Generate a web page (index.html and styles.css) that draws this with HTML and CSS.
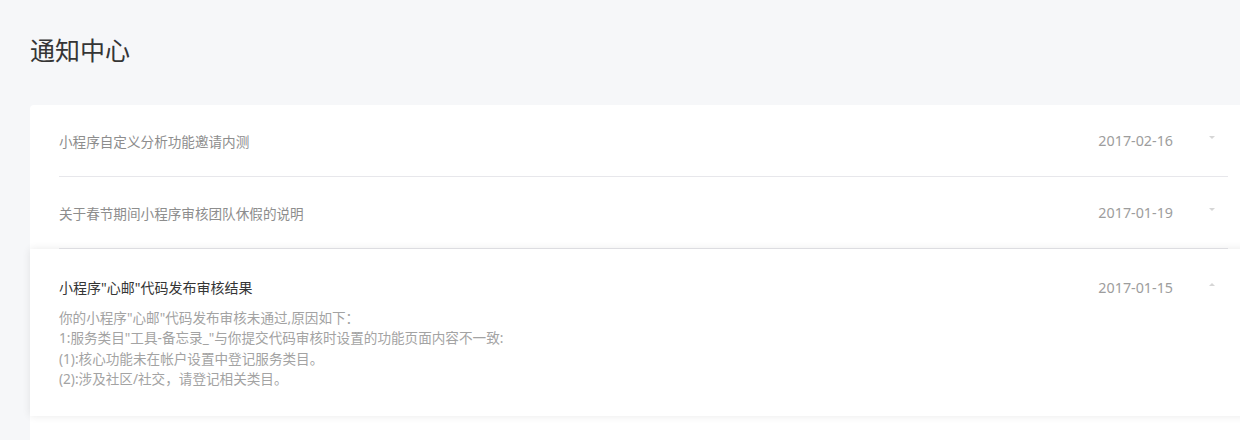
FILE: index.html
```html
<!DOCTYPE html>
<html lang="zh-CN">
<head>
    <meta charset="UTF-8">
    <meta name="viewport" content="width=device-width, initial-scale=1.0">
    <title>通知中心</title>
    <link rel="stylesheet" href="styles.css">
</head>
<body>
    <div class="page">
        <h1 class="page-title">通知中心</h1>

        <div class="notice-list">
            <div class="notice">
                <div class="notice-head">
                    <span class="notice-title">小程序自定义分析功能邀请内测</span>
                    <span class="notice-date">2017-02-16</span>
                    <span class="arrow arrow-down"></span>
                </div>
            </div>
            <div class="notice">
                <div class="notice-head">
                    <span class="notice-title">关于春节期间小程序审核团队休假的说明</span>
                    <span class="notice-date">2017-01-19</span>
                    <span class="arrow arrow-down"></span>
                </div>
            </div>
            <div class="notice open">
                <div class="notice-head">
                    <span class="notice-title">小程序"心邮"代码发布审核结果</span>
                    <span class="notice-date">2017-01-15</span>
                    <span class="arrow arrow-up"></span>
                </div>
                <div class="notice-body">
                    <p>你的小程序"心邮"代码发布审核未通过,原因如下：</p>
                    <p>1:服务类目"工具-备忘录_"与你提交代码审核时设置的功能页面内容不一致:</p>
                    <p>(1):核心功能未在帐户设置中登记服务类目。</p>
                    <p>(2):涉及社区/社交，请登记相关类目。</p>
                </div>
            </div>
        </div>
    </div>
</body>
</html>
```

FILE: styles.css
```css
html, body {
    margin: 0;
    background: #f6f7f9;
    overflow: hidden;
}

body {
    font-family: "Noto Sans", "Noto Sans CJK SC", sans-serif;
    color: #353535;
}

.page {
    width: 1227px;
    padding: 0 0 0 30px;
}

.page-title {
    margin: 0;
    padding-top: 32px;
    height: 105px;
    box-sizing: border-box;
    font-size: 25px;
    font-weight: normal;
    line-height: 36px;
    color: #353535;
}

.notice-list {
    background: #fff;
    border-radius: 4px 4px 0 0;
    padding-bottom: 60px;
}

.notice {
    position: relative;
}

.notice-head {
    display: flex;
    align-items: center;
    height: 71px;
    margin: 0 29px;
    border-bottom: 1px solid #e7e7eb;
}

.notice-title {
    flex: 1;
    font-size: 13.6px;
    color: #8d8d8d;
}

.notice-date {
    font-size: 14.3px;
    color: #9d9d9d;
    margin-right: 36px;
}

.arrow {
    width: 0;
    height: 0;
    border-left: 3px solid transparent;
    border-right: 3px solid transparent;
    margin-right: 13px;
}

.arrow-down {
    border-top: 3px solid #d6d6d6;
    margin-top: -6px;
}

.arrow-up {
    border-bottom: 3px solid #d6d6d6;
    margin-top: -6px;
}

.notice.open {
    padding: 28px 0 27px;
    box-shadow: 0 0 8px rgba(0, 0, 0, 0.09);
    z-index: 1;
}

.notice.open .notice-head {
    height: 20px;
    border-bottom: none;
}

.notice.open .notice-title {
    color: #353535;
    font-size: 14px;
}

.notice-body {
    margin: 11px 29px 0;
    font-size: 13.6px;
    line-height: 20.3px;
    color: #a3a3a3;
}

.notice-body p {
    margin: 0;
}
```
